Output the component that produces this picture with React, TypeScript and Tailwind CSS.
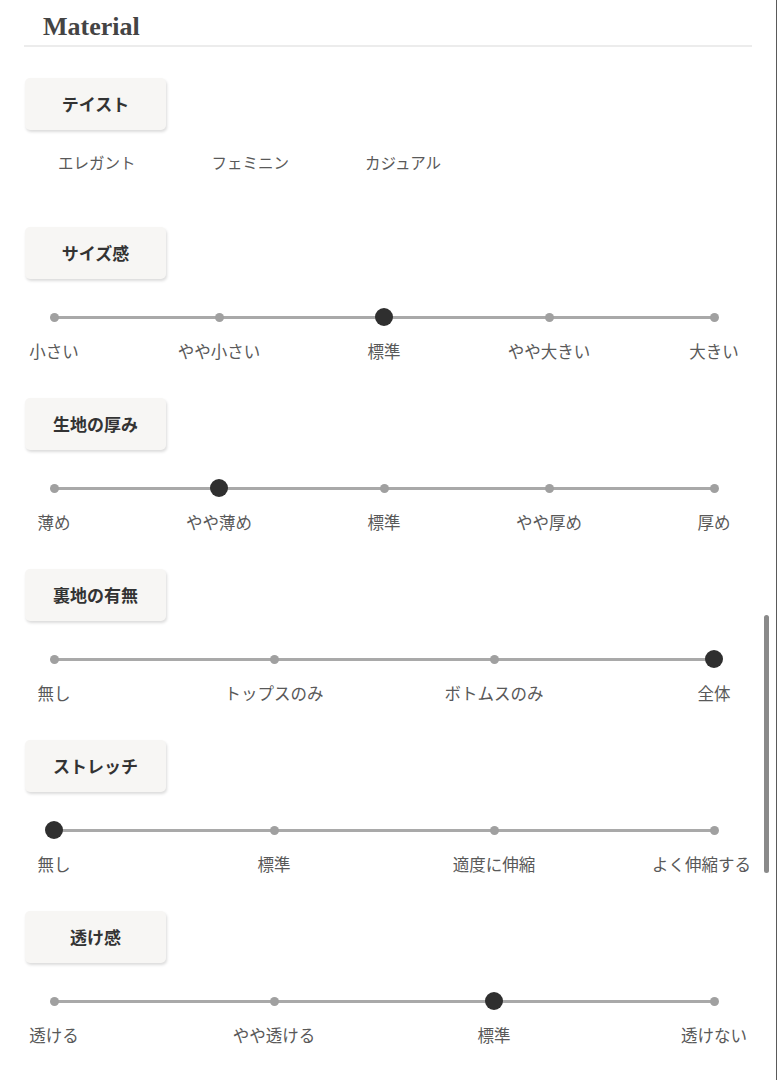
import React from 'react';

type Scale = {
    title: string;
    options: string[];
    selected: number;
    // last label pushed in so it stays inside the panel
    clampLast?: boolean;
};

const scales: Scale[] = [
    { title: 'サイズ感', options: ['小さい', 'やや小さい', '標準', 'やや大きい', '大きい'], selected: 2 },
    { title: '生地の厚み', options: ['薄め', 'やや薄め', '標準', 'やや厚め', '厚め'], selected: 1 },
    { title: '裏地の有無', options: ['無し', 'トップスのみ', 'ボトムスのみ', '全体'], selected: 3 },
    { title: 'ストレッチ', options: ['無し', '標準', '適度に伸縮', 'よく伸縮する'], selected: 0, clampLast: true },
    { title: '透け感', options: ['透ける', 'やや透ける', '標準', '透けない'], selected: 2 },
];

const tastes = ['エレガント', 'フェミニン', 'カジュアル'];

function Tag({ children }: { children: React.ReactNode }) {
    return (
        <div className="w-[141px] h-[52px] rounded-[5px] bg-[#f7f6f4] shadow-[1px_2px_3px_rgba(0,0,0,0.14)] flex items-center justify-center text-[17px] font-bold text-[#333]">
            {children}
        </div>
    );
}

function ScaleRow({ scale }: { scale: Scale }) {
    const last = scale.options.length - 1;
    return (
        <div className="pl-[29px] pr-[38px]">
            {/* track + dots */}
            <div className="relative h-[18px] flex items-center justify-between mt-[29px]">
                <div className="absolute left-0 right-0 top-[8px] h-[2.5px] bg-[#a9a9a9]" />
                {scale.options.map((opt, i) => (
                    <div key={opt} className="relative w-0 flex justify-center">
                        {i === scale.selected ? (
                            <div className="shrink-0 w-[18px] h-[18px] rounded-full bg-[#2f2f2f]" />
                        ) : (
                            <div className="shrink-0 w-[9px] h-[9px] rounded-full bg-[#a0a0a0]" />
                        )}
                    </div>
                ))}
            </div>
            {/* labels */}
            <div className="flex justify-between mt-[13px] h-[24px]">
                {scale.options.map((opt, i) => {
                    const clamp = scale.clampLast && i === last;
                    return (
                        <div key={opt} className={clamp ? 'w-0 flex justify-end' : 'w-0 flex justify-center'}>
                            <span
                                className={
                                    clamp
                                        ? 'shrink-0 whitespace-nowrap text-[16.5px] leading-[24px] text-[#595959] translate-x-[37px]'
                                        : 'shrink-0 whitespace-nowrap text-[16.5px] leading-[24px] text-[#595959]'
                                }
                            >
                                {opt}
                            </span>
                        </div>
                    );
                })}
            </div>
        </div>
    );
}

export default function App() {
    return (
        <div
            className="relative w-[777px] h-[1080px] bg-white border-r border-[#5a5a5a] overflow-hidden"
            style={{ fontFamily: '"Noto Sans CJK JP", "Noto Sans", sans-serif' }}
        >
            <div className="mx-6 w-[728px]">
                {/* Heading */}
                <div className="border-b-2 border-[#ececec] h-[47px] pl-[19px] flex items-end">
                    <h2
                        className="text-[26px] font-bold text-[#444] leading-none pb-[5px]"
                        style={{ fontFamily: '"Liberation Serif", serif' }}
                    >
                        Material
                    </h2>
                </div>

                {/* Taste */}
                <section className="mt-[31px] pl-[1px]">
                    <Tag>テイスト</Tag>
                    <div className="flex gap-[76px] pl-[33px] mt-[20px] h-[24px]">
                        {tastes.map((t) => (
                            <span key={t} className="text-[15.5px] leading-[24px] text-[#595959]">
                                {t}
                            </span>
                        ))}
                    </div>
                </section>

                {scales.map((s, i) => (
                    <section key={s.title} className={i === 0 ? 'mt-[53px] pl-[1px]' : 'mt-[35px] pl-[1px]'}>
                        <Tag>{s.title}</Tag>
                        <ScaleRow scale={s} />
                    </section>
                ))}
            </div>

            {/* scrollbar thumb */}
            <div className="absolute right-[7px] top-[615px] w-[5px] h-[258px] rounded-full bg-[#8a8a8a]" />
        </div>
    );
}
